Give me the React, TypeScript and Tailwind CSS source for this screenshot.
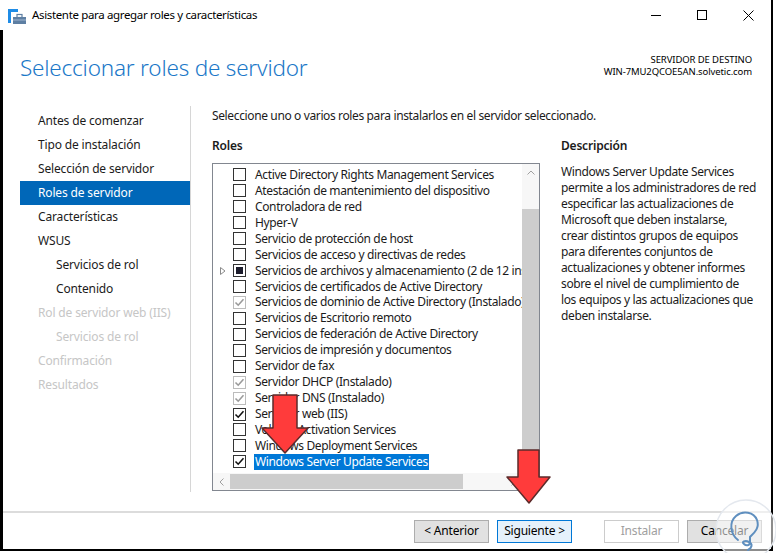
import React from "react";

type Role = {
  label: string;
  state: "off" | "on" | "installed" | "partial";
  expander?: boolean;
  selected?: boolean;
};

const roles: Role[] = [
  { label: "Active Directory Rights Management Services", state: "off" },
  { label: "Atestación de mantenimiento del dispositivo", state: "off" },
  { label: "Controladora de red", state: "off" },
  { label: "Hyper-V", state: "off" },
  { label: "Servicio de protección de host", state: "off" },
  { label: "Servicios de acceso y directivas de redes", state: "off" },
  { label: "Servicios de archivos y almacenamiento (2 de 12 instalados)", state: "partial", expander: true },
  { label: "Servicios de certificados de Active Directory", state: "off" },
  { label: "Servicios de dominio de Active Directory (Instalado)", state: "installed" },
  { label: "Servicios de Escritorio remoto", state: "off" },
  { label: "Servicios de federación de Active Directory", state: "off" },
  { label: "Servicios de impresión y documentos", state: "off" },
  { label: "Servidor de fax", state: "off" },
  { label: "Servidor DHCP (Instalado)", state: "installed" },
  { label: "Servidor DNS (Instalado)", state: "installed" },
  { label: "Servidor web (IIS)", state: "on" },
  { label: "Volume Activation Services", state: "off" },
  { label: "Windows Deployment Services", state: "off" },
  { label: "Windows Server Update Services", state: "on", selected: true },
];

const nav = [
  { label: "Antes de comenzar", indent: false, muted: false },
  { label: "Tipo de instalación", indent: false, muted: false },
  { label: "Selección de servidor", indent: false, muted: false },
  { label: "Roles de servidor", indent: false, muted: false, active: true },
  { label: "Características", indent: false, muted: false },
  { label: "WSUS", indent: false, muted: false },
  { label: "Servicios de rol", indent: true, muted: false },
  { label: "Contenido", indent: true, muted: false },
  { label: "Rol de servidor web (IIS)", indent: false, muted: true },
  { label: "Servicios de rol", indent: true, muted: true },
  { label: "Confirmación", indent: false, muted: true },
  { label: "Resultados", indent: false, muted: true },
];

const Check = ({ state }: { state: Role["state"] }) => {
  const gray = state === "installed";
  return (
    <span
      className={`w-[13px] h-[13px] shrink-0 border flex items-center justify-center bg-white ${
        gray ? "border-[#bcbcbc]" : "border-[#333]"
      }`}
    >
      {(state === "on" || state === "installed") && (
        <svg width="11" height="11" viewBox="0 0 11 11">
          <path
            d="M1.5 5.5 L4.2 8.2 L9.5 2.2"
            fill="none"
            stroke={gray ? "#9a9a9a" : "#111"}
            strokeWidth="1.6"
          />
        </svg>
      )}
      {state === "partial" && <span className="w-[7px] h-[7px] bg-[#1c1c2c]" />}
    </span>
  );
};

const Button = ({
  label,
  variant = "normal",
}: {
  label: string;
  variant?: "normal" | "focus" | "disabled";
}) => (
  <div
    className={`w-[75px] h-[23px] flex items-center justify-center border text-[12px] tracking-[-0.2px] ${
      variant === "focus"
        ? "border-[#0078d7] bg-[#e5f1fb] text-black"
        : variant === "disabled"
        ? "border-[#cccccc] bg-white text-[#a0a0a0]"
        : "border-[#adadad] bg-[#e1e1e1] text-black"
    }`}
  >
    {label}
  </div>
);

export default function App() {
  return (
    <div className="w-[776px] h-[553px] bg-white relative overflow-hidden text-[#1b1b1b] font-['Noto_Sans','Open_Sans',sans-serif]">
      <div className="w-[773px] h-[551px] border-r-2 border-b-2 border-black flex flex-col">
        {/* title bar */}
        <div className="h-[30px] flex items-center shrink-0">
          <svg width="22" height="20" viewBox="0 0 22 20" className="ml-[7px] mr-[3px]">
            <rect x="1" y="4" width="3" height="14" fill="#1f8ce6" />
            <rect x="1" y="4" width="10" height="3" fill="#1f8ce6" />
            <rect x="6" y="12" width="13" height="7" fill="#5e7fa3" />
            <rect x="10" y="9.5" width="5" height="3" fill="none" stroke="#5e7fa3" strokeWidth="1.2" />
            <rect x="6" y="14.5" width="13" height="1" fill="#9fb6cf" />
          </svg>
          <span className="text-[11.5px] text-black tracking-[-0.35px]">Asistente para agregar roles y características</span>
          <div className="ml-auto flex items-center h-full">
            <div className="w-[46px] h-full flex items-center justify-center">
              <span className="w-[10px] h-px bg-black" />
            </div>
            <div className="w-[46px] h-full flex items-center justify-center">
              <span className="w-[10px] h-[10px] border border-black" />
            </div>
            <div className="w-[46px] h-full flex items-center justify-center">
              <svg width="11" height="11" viewBox="0 0 11 11">
                <path d="M0.5 0.5 L10.5 10.5 M10.5 0.5 L0.5 10.5" stroke="#000" strokeWidth="1" />
              </svg>
            </div>
          </div>
        </div>

        <div className="flex-1 border-l-[3px] border-black flex flex-col min-h-0">
          {/* header */}
          <div className="h-[72px] shrink-0 flex items-start justify-between pl-[17px] pr-[19px]">
            <div className="pt-[21px] text-[22.5px] font-light text-[#1b78c8] tracking-[-0.2px]">
              Seleccionar roles de servidor
            </div>
            <div className="pt-[24px] text-right text-[9.5px] leading-[12px] text-black tracking-[-0.1px]">
              <div>SERVIDOR DE DESTINO</div>
              <div>WIN-7MU2QCOE5AN.solvetic.com</div>
            </div>
          </div>

          {/* body */}
          <div className="flex-1 flex min-h-0">
            <div className="w-[188px] shrink-0 border-r border-[#d6d6d6] mt-[4px] mb-[19px] pt-[3px] pl-[17px]">
              {nav.map((n, i) => (
                <div
                  key={i}
                  className={`h-[24px] flex items-center text-[12px] tracking-[-0.15px] ${
                    n.active ? "bg-[#0067b8] text-white" : n.muted ? "text-[#c6c6c6]" : "text-[#1b1b1b]"
                  } ${n.indent ? "pl-[36px]" : "pl-[18px]"}`}
                >
                  {n.label}
                </div>
              ))}
            </div>

            <div className="flex-1 pl-[21px] pt-[6px] flex flex-col">
              <div className="text-[12px] leading-[16px] tracking-[-0.37px]">
                Seleccione uno o varios roles para instalarlos en el servidor seleccionado.
              </div>
              <div className="flex mt-[14px] gap-[21px]">
                <div className="w-[328px] shrink-0 flex flex-col">
                  <div className="text-[12px] leading-[16px] font-semibold tracking-[-0.2px]">Roles</div>
                  <div className="mt-[9px] h-[328px] border border-[#828790] flex flex-col">
                    <div className="flex flex-1 min-h-0">
                      <div className="flex-1 min-w-0 overflow-hidden pt-[3px]">
                        {roles.map((r, i) => (
                          <div key={i} className="h-[15.94px] flex items-center whitespace-nowrap">
                            <span className="w-[20px] shrink-0 flex justify-center">
                              {r.expander && (
                                <svg width="6" height="8" viewBox="0 0 6 8">
                                  <path d="M0.5 0.5 L5 4 L0.5 7.5 Z" fill="none" stroke="#8a8a8a" />
                                </svg>
                              )}
                            </span>
                            <Check state={r.state} />
                            <span
                              className={`ml-[8px] shrink-0 text-[12px] leading-[16px] px-px tracking-[-0.37px] ${
                                r.selected ? "bg-[#0078d7] text-white" : "text-[#1b1b1b]"
                              }`}
                            >
                              {r.label}
                            </span>
                          </div>
                        ))}
                      </div>
                      {/* vertical scrollbar */}
                      <div className="w-[17px] shrink-0 bg-[#f7f7f7] flex flex-col items-center">
                        <div className="h-[17px] w-full flex items-center justify-center">
                          <svg width="8" height="5" viewBox="0 0 8 5">
                            <path d="M0.5 4.5 L4 1 L7.5 4.5" fill="none" stroke="#a0a0a0" />
                          </svg>
                        </div>
                        <div className="mt-[28px] w-full h-[248px] bg-[#cdcdcd]" />
                        <div className="mt-auto h-[17px] w-full flex items-center justify-center">
                          <svg width="8" height="5" viewBox="0 0 8 5">
                            <path d="M0.5 0.5 L4 4 L7.5 0.5" fill="none" stroke="#a0a0a0" />
                          </svg>
                        </div>
                      </div>
                    </div>
                    {/* horizontal scrollbar */}
                    <div className="h-[17px] shrink-0 flex bg-[#f7f7f7]">
                      <div className="w-[17px] flex items-center justify-center">
                        <svg width="5" height="8" viewBox="0 0 5 8">
                          <path d="M4.5 0.5 L1 4 L4.5 7.5" fill="none" stroke="#a0a0a0" />
                        </svg>
                      </div>
                      <div className="w-[233px] my-px bg-[#cdcdcd]" />
                      <div className="flex-1" />
                      <div className="w-[17px] flex items-center justify-center">
                        <svg width="5" height="8" viewBox="0 0 5 8">
                          <path d="M0.5 0.5 L4 4 L0.5 7.5" fill="none" stroke="#a0a0a0" />
                        </svg>
                      </div>
                      <div className="w-[17px] bg-[#f0f0f0]" />
                    </div>
                  </div>
                </div>

                <div className="w-[200px] shrink-0">
                  <div className="text-[12px] leading-[16px] font-semibold tracking-[-0.2px]">Descripción</div>
                  <p className="mt-[10px] text-[12px] leading-[16px] tracking-[-0.37px] text-[#1b1b1b]">
                    Windows Server Update Services
                    <br />
                    permite a los administradores de red
                    <br />
                    especificar las actualizaciones de
                    <br />
                    Microsoft que deben instalarse,
                    <br />
                    crear distintos grupos de equipos
                    <br />
                    para diferentes conjuntos de
                    <br />
                    actualizaciones y obtener informes
                    <br />
                    sobre el nivel de cumplimiento de
                    <br />
                    los equipos y las actualizaciones que
                    <br />
                    deben instalarse.
                  </p>
                </div>
              </div>
            </div>
          </div>

          {/* footer */}
          <div className="h-[38px] shrink-0 border-t-2 border-[#dcdcdc] flex items-center pr-[9px]">
            <div className="ml-auto flex items-center">
              <Button label="< Anterior" />
              <div className="ml-[8px]">
                <Button label="Siguiente >" variant="focus" />
              </div>
              <div className="ml-[32px]">
                <Button label="Instalar" variant="disabled" />
              </div>
              <div className="ml-[8px]">
                <Button label="Cancelar" />
              </div>
            </div>
          </div>
        </div>
      </div>

      {/* red arrows */}
      <svg width="50" height="62" viewBox="0 0 50 62" className="absolute left-[260px] top-[393px]">
        <polygon
          points="13,2 37,2 37,35 48,35 25,60 2,35 13,35"
          fill="#ff3b3b"
          stroke="#5b2b2b"
          strokeWidth="1.5"
          strokeLinejoin="round"
        />
      </svg>
      <svg width="48" height="58" viewBox="0 0 48 58" className="absolute left-[505px] top-[448px]">
        <polygon
          points="13,2 34,2 34,29 45,29 24,55 2,29 13,29"
          fill="#ff3b3b"
          stroke="#5b2b2b"
          strokeWidth="1.5"
          strokeLinejoin="round"
        />
      </svg>

      {/* watermark logo */}
      <svg width="66" height="62" viewBox="0 0 66 62" className="absolute left-[712px] top-[496px]">
        <circle cx="34" cy="34" r="30" fill="#ffffff" fillOpacity="0.55" stroke="#e4e8ee" strokeWidth="1.5" />
        <path
          d="M26 44 C18 38 17 26 24 20 C31 14 42 16 45 24 C48 32 42 37 38 41 L38 46 C38 50 34 50 32 48 C29 46 33 44 37 46 C41 48 40 52 36 54"
          fill="none"
          stroke="#5f8fbf"
          strokeWidth="2"
          strokeLinecap="round"
        />
      </svg>
    </div>
  );
}
